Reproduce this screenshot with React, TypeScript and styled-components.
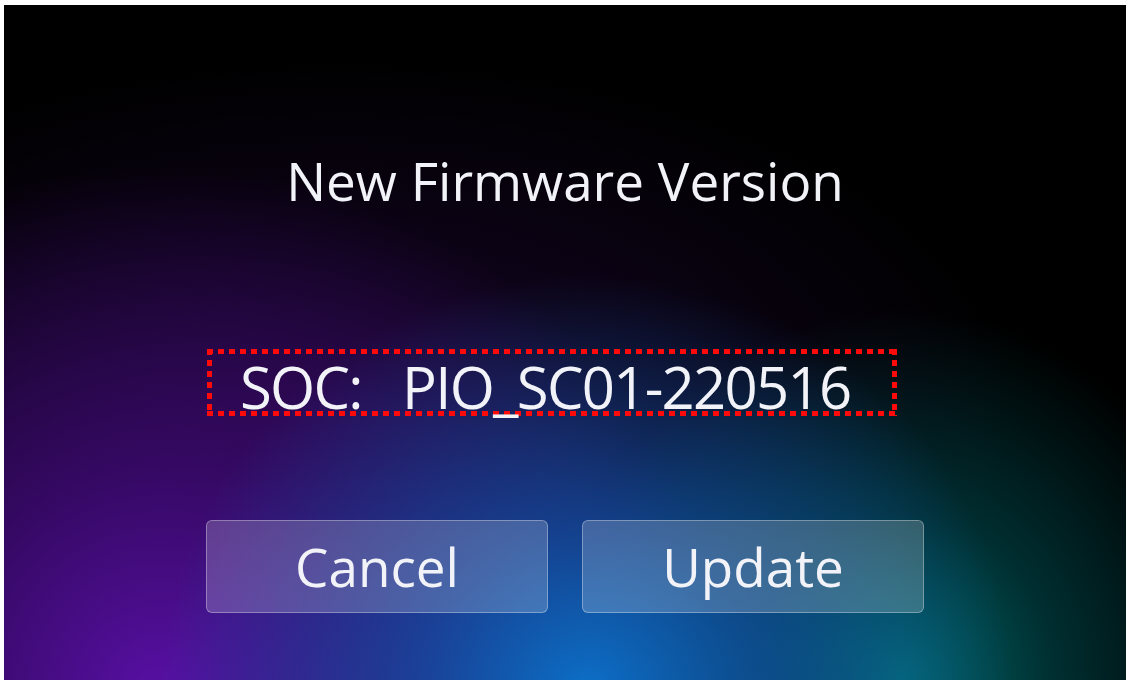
import React from "react";
import styled, { createGlobalStyle } from "styled-components";

const GlobalStyle = createGlobalStyle`
  html, body { margin: 0; padding: 0; background: #ffffff; }
  body { font-family: "Open Sans", "Noto Sans", sans-serif; }
`;

const Page = styled.div`
  width: 1129px;
  height: 685px;
  padding: 5px 3px 5px 4px;
  box-sizing: border-box;
  background: #ffffff;
`;

const Screen = styled.div`
  width: 1122px;
  height: 675px;
  box-sizing: border-box;
  padding-top: 149px;
  display: flex;
  flex-direction: column;
  align-items: center;
  color: #f2f3f8;
  background-color: #000;
  background-image:
    radial-gradient(ellipse 38% 62% at 52% 102%, rgba(12, 112, 200, 1) 0%, rgba(18, 88, 178, 0.7) 40%, rgba(0, 0, 0, 0) 100%),
    radial-gradient(ellipse 30% 55% at 80% 100%, rgba(0, 105, 105, 1) 0%, rgba(0, 78, 82, 0.6) 45%, rgba(0, 0, 0, 0) 100%),
    radial-gradient(ellipse 50% 78% at 14% 102%, rgba(88, 16, 165, 1) 0%, rgba(64, 10, 120, 0.75) 45%, rgba(0, 0, 0, 0) 100%),
    radial-gradient(ellipse 60% 50% at 30% 58%, rgba(45, 10, 80, 0.5) 0%, rgba(0, 0, 0, 0) 100%);
`;

const Title = styled.div`
  font-size: 53px;
  line-height: 53px;
  white-space: nowrap;
`;

const VersionBox = styled.div`
  margin-top: 142px;
  margin-right: 26px;
  width: 690px;
  height: 67px;
  box-sizing: border-box;
  padding: 9px 0 0 33px;
  background:
    repeating-linear-gradient(90deg, #ff0a0a 0 6px, transparent 6px 11px) left top / 100% 5px no-repeat,
    repeating-linear-gradient(90deg, #ff0a0a 0 6px, transparent 6px 11px) left bottom / 100% 5px no-repeat,
    repeating-linear-gradient(180deg, #ff0a0a 0 6px, transparent 6px 11px) left top / 5px 100% no-repeat,
    repeating-linear-gradient(180deg, #ff0a0a 0 6px, transparent 6px 11px) right top / 5px 100% no-repeat;
`;

const VersionText = styled.div`
  font-size: 58px;
  line-height: 58px;
  white-space: pre;
  letter-spacing: -1.7px;
`;

const ButtonRow = styled.div`
  margin-top: 104px;
  display: flex;
  gap: 34px;
`;

const Button = styled.div`
  width: 342px;
  height: 93px;
  box-sizing: border-box;
  display: flex;
  align-items: center;
  justify-content: center;
  border-radius: 6px;
  border: 1px solid rgba(255, 255, 255, 0.32);
  background: rgba(255, 255, 255, 0.2);
  font-size: 53px;
  line-height: 53px;
  color: #f2f3f8;
`;

export default function App() {
  return (
    <>
      <GlobalStyle />
      <Page>
        <Screen>
          <Title>New Firmware Version</Title>
          <VersionBox>
            <VersionText>{"SOC:   PIO_SC01-220516"}</VersionText>
          </VersionBox>
          <ButtonRow>
            <Button>Cancel</Button>
            <Button>Update</Button>
          </ButtonRow>
        </Screen>
      </Page>
    </>
  );
}
